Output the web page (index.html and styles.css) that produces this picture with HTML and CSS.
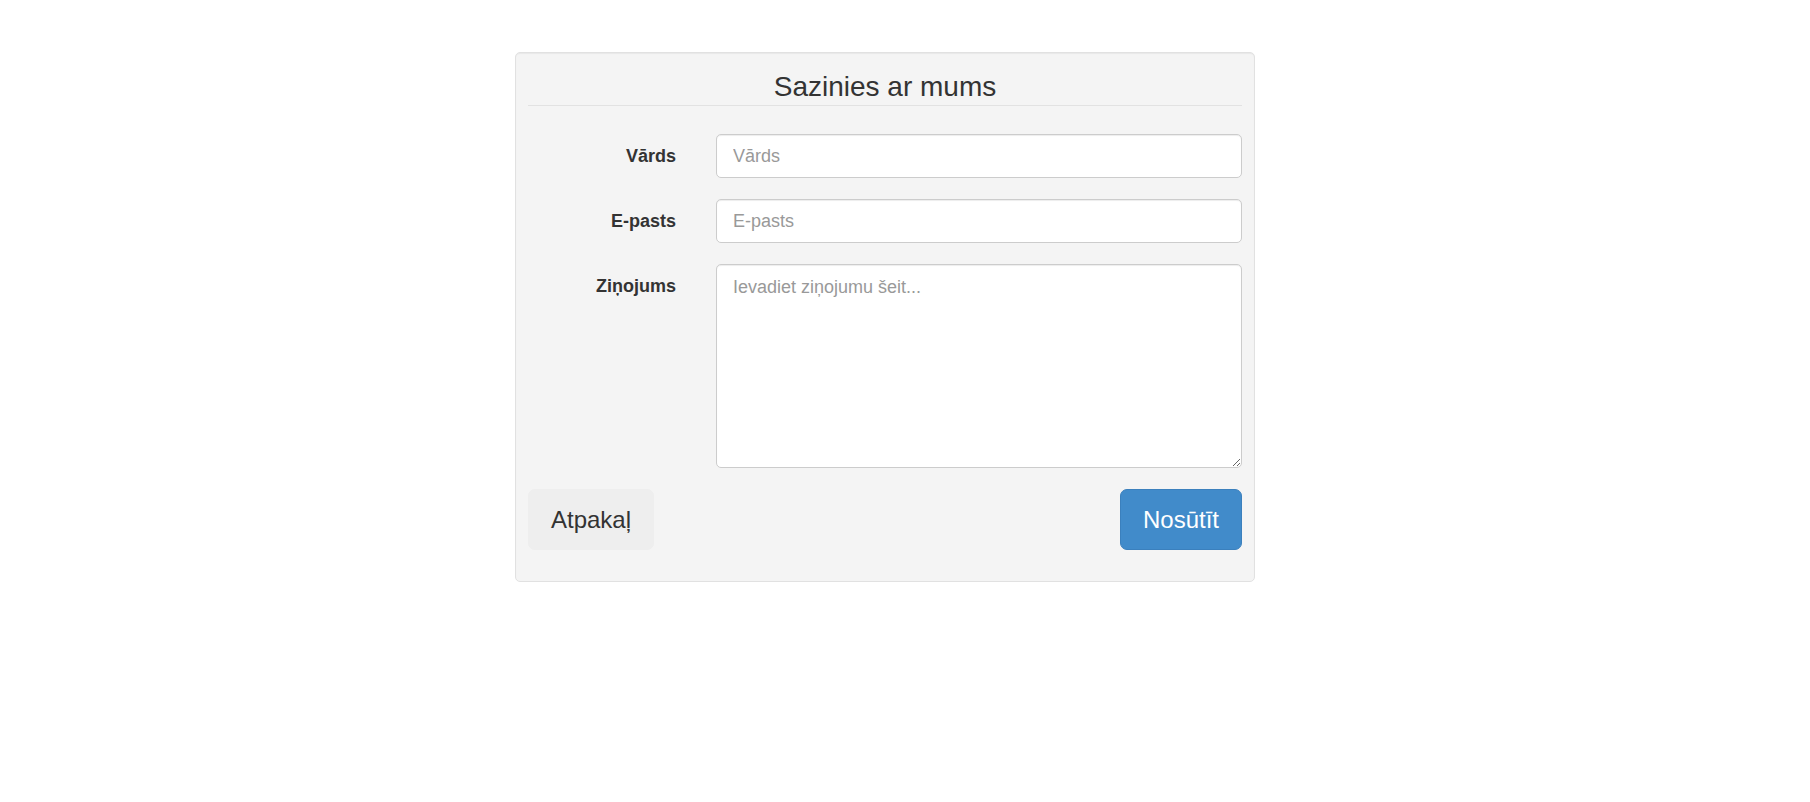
FILE: index.html
```html
<!DOCTYPE html>
<html lang="lv">
    <head>
        <meta charset="UTF-8">
        <meta name="viewport" content="width=device-width, initial-scale=1.0">
        <title>Sazinies ar mums</title>
        <link rel="stylesheet" href="styles.css">
    </head>
    <body>
        <div class="page">
            <form class="contact-well">
                <h3 class="contact-title">Sazinies ar mums</h3>
                <div class="form-row">
                    <label for="name">Vārds</label>
                    <input type="text" id="name" class="form-control" placeholder="Vārds">
                </div>
                <div class="form-row">
                    <label for="email">E-pasts</label>
                    <input type="email" id="email" class="form-control" placeholder="E-pasts">
                </div>
                <div class="form-row">
                    <label for="message">Ziņojums</label>
                    <textarea id="message" class="form-control message" placeholder="Ievadiet ziņojumu šeit..."></textarea>
                </div>
                <div class="form-actions">
                    <button type="button" class="btn btn-back">Atpakaļ</button>
                    <button type="submit" class="btn btn-primary">Nosūtīt</button>
                </div>
            </form>
        </div>
    </body>
</html>
```

FILE: styles.css
```css
*,
*::before,
*::after {
    box-sizing: border-box;
}

body {
    margin: 0;
    background-color: #fff;
    color: #333;
    font-family: "Liberation Sans", Arial, sans-serif;
    font-size: 18px;
}

.page {
    padding: 52px 0 0 515px;
}

.contact-well {
    width: 740px;
    padding: 12px 12px 31px;
    background-color: #f4f4f4;
    border: 1px solid #e1e1e1;
    border-radius: 5px;
    box-shadow: inset 0 1px 1px rgba(0, 0, 0, .05);
}

.contact-title {
    margin: 5px 0 28px;
    padding-bottom: 2px;
    border-bottom: 1px solid #e2e2e2;
    font-size: 28px;
    font-weight: normal;
    line-height: 33px;
    text-align: center;
    color: #333;
}

.form-row {
    display: grid;
    grid-template-columns: 148px 1fr;
    column-gap: 40px;
    align-items: start;
    margin-bottom: 21px;
}

.form-row label {
    padding-top: 1px;
    text-align: right;
    font-weight: bold;
    line-height: 43px;
    color: #333;
}

.form-control {
    display: block;
    width: 100%;
    height: 44px;
    padding: 9px 16px;
    font-family: inherit;
    font-size: 18px;
    line-height: 25px;
    color: #555;
    background-color: #fff;
    border: 1px solid #ccc;
    border-radius: 5px;
    box-shadow: inset 0 1px 1px rgba(0, 0, 0, .075);
    outline: none;
}

.form-control::placeholder {
    color: #999;
}

.form-control.message {
    height: 204px;
    padding-top: 10px;
    resize: vertical;
}

.form-actions {
    display: flex;
    justify-content: space-between;
}

.btn {
    padding: 14px 22px;
    font-family: inherit;
    font-size: 24px;
    line-height: 31px;
    border: 1px solid transparent;
    border-radius: 7px;
    cursor: pointer;
}

.btn-back {
    color: #333;
    background-color: #eeeeee;
    border-color: #eeeeee;
}

.btn-primary {
    color: #fff;
    background-color: #418bca;
    border-color: #3b80bd;
}
```
